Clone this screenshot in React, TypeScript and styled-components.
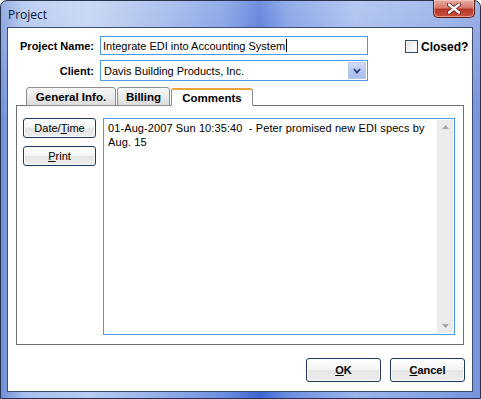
import React from "react";
import styled, { createGlobalStyle } from "styled-components";

const GlobalStyle = createGlobalStyle`
  html, body {
    margin: 0;
    padding: 0;
    background: #ffffff;
  }
  body {
    font-family: "Liberation Sans", Arial, sans-serif;
    color: #000;
  }
`;

const Window = styled.div`
  width: 481px;
  height: 399px;
  box-sizing: border-box;
  display: flex;
  flex-direction: column;
  padding: 0 7px 6px 6px;
  border: 1px solid #26334f;
  border-radius: 7px 7px 0 0;
  background:
    linear-gradient(180deg, rgba(255, 255, 255, 0.28) 0%, rgba(255, 255, 255, 0) 30%),
    linear-gradient(
      90deg,
      #6f8fd6 0%,
      #a6bfee 5%,
      #b8ccf1 18%,
      #93ade8 34%,
      #6a8de0 47%,
      #3b64d3 54%,
      #6d8fe1 60%,
      #9bb4eb 74%,
      #87a3e4 90%,
      #7693dc 100%
    );
`;

const TitleBar = styled.div`
  height: 26px;
  display: flex;
  align-items: flex-start;
  justify-content: space-between;
`;

const TitleText = styled.span`
  align-self: center;
  margin-left: 1px;
  font-family: "Open Sans", "Liberation Sans", sans-serif;
  font-size: 12px;
  color: #0b1530;
`;

const CloseButton = styled.div`
  width: 42px;
  height: 18px;
  margin-top: -1px;
  margin-right: -2px;
  box-sizing: border-box;
  border: 1px solid #5b1f18;
  border-top: none;
  border-radius: 0 0 5px 5px;
  display: flex;
  align-items: center;
  justify-content: center;
  background: linear-gradient(180deg, #e7aca4 0%, #d7786c 45%, #b8362a 55%, #c9533f 100%);
  box-shadow: inset 0 0 0 1px rgba(255, 220, 210, 0.5);
`;

const ClientArea = styled.div`
  flex: 1;
  display: flex;
  flex-direction: column;
  padding: 8px 7px 9px 8px;
  background: #ffffff;
  border: 1px solid #3c4d70;
`;

const FormGrid = styled.div`
  display: grid;
  grid-template-columns: 78px 268px 1fr;
  grid-template-rows: 19px 21px;
  column-gap: 6px;
  row-gap: 5px;
  align-items: center;
`;

const FieldLabel = styled.label`
  text-align: right;
  font-size: 11px;
  font-weight: bold;
`;

const TextInput = styled.div`
  height: 19px;
  box-sizing: border-box;
  border: 1px solid #4c9be8;
  padding: 0 2px;
  display: flex;
  align-items: center;
  font-size: 11px;
  white-space: nowrap;
`;

const Caret = styled.span`
  display: inline-block;
  width: 0;
  height: 13px;
  border-left: 1px solid #000;
  margin-left: 1px;
`;

const Combo = styled.div`
  height: 21px;
  box-sizing: border-box;
  border: 1px solid #4c9be8;
  display: flex;
  align-items: stretch;
  font-size: 11px;
`;

const ComboText = styled.span`
  flex: 1;
  display: flex;
  align-items: center;
  padding-left: 3px;
`;

const ComboButton = styled.span`
  width: 16px;
  margin: 1px;
  display: flex;
  align-items: center;
  justify-content: center;
  background: linear-gradient(180deg, #d2ddf7 0%, #b7c8f2 50%, #a9bdee 100%);
  border: 1px solid #b9c9ee;
`;

const CheckWrap = styled.div`
  display: flex;
  align-items: center;
  gap: 3px;
  margin-left: 31px;
  margin-top: 2px;
`;

const CheckBox = styled.span`
  width: 13px;
  height: 13px;
  box-sizing: border-box;
  border: 1px solid #2f4a6e;
  background: linear-gradient(135deg, #dcdcdc 0%, #f6f6f6 60%, #ffffff 100%);
  box-shadow: inset 0 0 0 1px #f4f4f4;
`;

const CheckLabel = styled.span`
  font-size: 12px;
  font-weight: bold;
`;

const TabStrip = styled.div`
  display: flex;
  align-items: flex-end;
  gap: 1px;
  margin: 6px 0 -1px 10px;
  height: 19px;
  position: relative;
  z-index: 1;
`;

const Tab = styled.div<{ $w: number; $active?: boolean }>`
  width: ${(p) => p.$w}px;
  height: ${(p) => (p.$active ? 18 : 19)}px;
  box-sizing: border-box;
  display: flex;
  align-items: center;
  justify-content: center;
  font-size: 11.5px;
  font-weight: bold;
  border: 1px solid ${(p) => (p.$active ? "#8a8a8a" : "#8d8d8d")};
  border-top: ${(p) => (p.$active ? "2px solid #eaa334" : "1px solid #8d8d8d")};
  border-bottom: ${(p) => (p.$active ? "1px solid #ffffff" : "1px solid #8d8d8d")};
  border-radius: 3px 3px 0 0;
  background: ${(p) =>
    p.$active ? "#ffffff" : "linear-gradient(180deg, #f7f7f7 0%, #ececec 50%, #dcdcdc 100%)"};
  padding-top: ${(p) => (p.$active ? 1 : 0)}px;
`;

const TabPanel = styled.div`
  height: 240px;
  box-sizing: border-box;
  border: 1px solid #6f6f6f;
  margin-right: 1px;
  padding: 12px 8px 9px 6px;
  display: flex;
  gap: 7px;
`;

const SideButtons = styled.div`
  width: 73px;
  display: flex;
  flex-direction: column;
  gap: 8px;
`;

const PushButton = styled.button<{ $bold?: boolean; $h?: number }>`
  height: ${(p) => p.$h ?? 20}px;
  width: 100%;
  box-sizing: border-box;
  padding: 0;
  border: 1px solid #1e3a63;
  border-radius: 3px;
  background: linear-gradient(180deg, #ffffff 0%, #f4f4f4 48%, #e6e6e6 52%, #ededed 100%);
  box-shadow: inset 0 0 0 1px #fbfbfb;
  font-family: "Liberation Sans", Arial, sans-serif;
  font-size: 11px;
  font-weight: ${(p) => (p.$bold ? "bold" : "normal")};
  color: #000;
`;

const CommentBox = styled.div`
  flex: 1;
  display: flex;
  border: 1px solid #4c9be8;
`;

const CommentText = styled.div`
  flex: 1;
  min-width: 0;
  padding: 2px 4px;
  font-size: 11px;
  letter-spacing: 0.1px;
  line-height: 14px;
  white-space: nowrap;
`;

const ScrollBar = styled.div`
  width: 16px;
  margin: 1px;
  display: flex;
  flex-direction: column;
  justify-content: space-between;
  align-items: center;
  padding: 5px 0;
  background: #ebebeb;
`;

const Footer = styled.div`
  margin-top: 13px;
  display: flex;
  justify-content: flex-end;
  gap: 9px;
`;

const FooterButton = styled.div`
  width: 75px;
`;

const Arrow = ({ up }: { up?: boolean }) => (
  <svg width="7" height="4" viewBox="0 0 7 4">
    <path d={up ? "M0 4 L3.5 0 L7 4 Z" : "M0 0 L3.5 4 L7 0 Z"} fill="#a6a6a6" />
  </svg>
);

export default function App() {
  return (
    <>
      <GlobalStyle />
      <Window>
        <TitleBar>
          <TitleText>Project</TitleText>
          <CloseButton>
            <svg width="14" height="11" viewBox="0 0 14 11">
              <path d="M2 1.5 L12 9.5 M12 1.5 L2 9.5" stroke="#5a1c16" strokeWidth="4" strokeLinecap="round" />
              <path d="M2 1.5 L12 9.5 M12 1.5 L2 9.5" stroke="#ffffff" strokeWidth="2.4" strokeLinecap="round" />
            </svg>
          </CloseButton>
        </TitleBar>
        <ClientArea>
          <FormGrid>
            <FieldLabel>Project Name:</FieldLabel>
            <TextInput>
              Integrate EDI into Accounting System
              <Caret />
            </TextInput>
            <CheckWrap>
              <CheckBox />
              <CheckLabel>Closed?</CheckLabel>
            </CheckWrap>
            <FieldLabel>Client:</FieldLabel>
            <Combo>
              <ComboText>Davis Building Products, Inc.</ComboText>
              <ComboButton>
                <svg width="8" height="6" viewBox="0 0 8 6">
                  <path d="M1 1 L4 4.5 L7 1" fill="none" stroke="#2b3f78" strokeWidth="1.8" />
                </svg>
              </ComboButton>
            </Combo>
          </FormGrid>
          <TabStrip>
            <Tab $w={90}>General Info.</Tab>
            <Tab $w={53}>Billing</Tab>
            <Tab $w={82} $active>
              Comments
            </Tab>
          </TabStrip>
          <TabPanel>
            <SideButtons>
              <PushButton>
                Date/<u>T</u>ime
              </PushButton>
              <PushButton>
                <u>P</u>rint
              </PushButton>
            </SideButtons>
            <CommentBox>
              <CommentText>
                01-Aug-2007 Sun 10:35:40&nbsp; - Peter promised new EDI specs by
                <br />
                Aug. 15
              </CommentText>
              <ScrollBar>
                <Arrow up />
                <Arrow />
              </ScrollBar>
            </CommentBox>
          </TabPanel>
          <Footer>
            <FooterButton>
              <PushButton $bold $h={24}>
                <u>O</u>K
              </PushButton>
            </FooterButton>
            <FooterButton>
              <PushButton $bold $h={24}>
                <u>C</u>ancel
              </PushButton>
            </FooterButton>
          </Footer>
        </ClientArea>
      </Window>
    </>
  );
}
